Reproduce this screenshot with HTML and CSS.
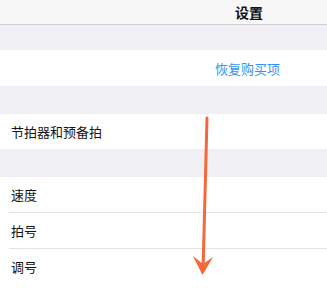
FILE: index.html
```html
<!DOCTYPE html>
<html lang="zh-CN">
<head>
<meta charset="utf-8">
<link rel="stylesheet" href="styles.css">
</head>
<body>
<div class="screen">
  <header class="nav"><span class="title">设置</span></header>
  <div class="gap gap-first"></div>
  <div class="group">
    <div class="row row-action"><span class="link">恢复购买项</span></div>
  </div>
  <div class="gap"></div>
  <div class="group">
    <div class="row"><span class="label">节拍器和预备拍</span></div>
  </div>
  <div class="gap"></div>
  <div class="group">
    <div class="row"><span class="label">速度</span></div>
    <div class="row sep"><span class="label">拍号</span></div>
    <div class="row sep"><span class="label">调号</span></div>
  </div>
  <svg class="arrow" width="327" height="291" viewBox="0 0 327 291">
    <line x1="207" y1="118" x2="203.2" y2="264" stroke="#f4683a" stroke-width="3" stroke-linecap="round"/>
    <polygon points="193,256 203,264 213,257 202.5,275" fill="#f4683a"/>
  </svg>
</div>
</body>
</html>
```
FILE: styles.css
```css
html, body {
  margin: 0;
  padding: 0;
  background: #ffffff;
}
body {
  font-family: "Noto Sans CJK SC", "Noto Sans", sans-serif;
}
.screen {
  position: relative;
  width: 327px;
  height: 291px;
  overflow: hidden;
  background: #ffffff;
}
.nav {
  height: 24px;
  background: #f7f7f7;
  border-bottom: 1px solid #cfcfd3;
  display: flex;
  align-items: center;
  padding-left: 235px;
}
.title {
  font-size: 14px;
  font-weight: 600;
  color: #111;
  line-height: 1;
}
.gap {
  height: 28px;
  background: #efeff4;
}
.gap-first {
  height: 25px;
}
.group {
  background: #ffffff;
}
.row {
  height: 35px;
  display: flex;
  align-items: center;
  padding-left: 11px;
}
.row-action {
  height: 36px;
  padding-left: 215px;
}
.sep {
  height: 36px;
  box-sizing: border-box;
  border-top: 1px solid #e3e3e6;
  margin-left: 9px;
  padding-left: 2px;
}
.label {
  font-size: 13px;
  color: #141414;
  line-height: 1;
}
.link {
  font-size: 13px;
  color: #3493f2;
  line-height: 1;
}
.arrow {
  position: absolute;
  left: 0;
  top: 0;
  pointer-events: none;
}
```
